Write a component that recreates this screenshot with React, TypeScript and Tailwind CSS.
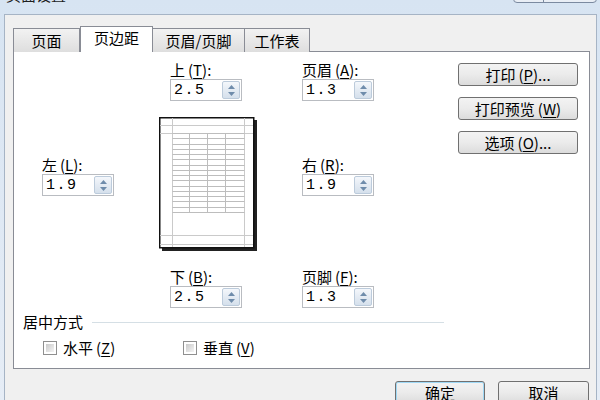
import React from "react";

const CJK = { fontFamily: '"Noto Sans CJK SC", "Noto Sans", sans-serif' };

function Mn({ pre, k, post }: { pre: string; k: string; post: string }) {
  return (
    <span className="whitespace-nowrap">
      {pre}
      <span className="ml-[3px]">(</span>
      <span className="underline underline-offset-2">{k}</span>){post}
    </span>
  );
}

function SpinBtn() {
  return (
    <div className="w-[18px] h-[18px] rounded-[2px] border border-[#bccbdb] bg-gradient-to-b from-[#f4f7fb] via-[#e4ebf3] to-[#d5e0ec] flex flex-col items-center justify-center gap-[3px]">
      <svg width="7" height="4" viewBox="0 0 7 4"><path d="M0 4 L3.5 0 L7 4 Z" fill="#6f8cab" /></svg>
      <svg width="7" height="4" viewBox="0 0 7 4"><path d="M0 0 L3.5 4 L7 0 Z" fill="#6f8cab" /></svg>
    </div>
  );
}

function Spinner({ value }: { value: string }) {
  return (
    <div className="w-[72px] h-[22px] border border-[#b9bcc1] bg-white flex items-center justify-between pl-[3px] pr-[1px]">
      <span className="text-[15px] leading-none tracking-[1.5px] text-black" style={{ fontFamily: '"Liberation Mono", monospace' }}>
        {value}
      </span>
      <SpinBtn />
    </div>
  );
}

function Field({ pre, k, value }: { pre: string; k: string; value: string }) {
  return (
    <div className="flex flex-col">
      <div className="h-[16px] leading-[16px] text-[15px] mb-px">
        <Mn pre={pre} k={k} post=":" />
      </div>
      <Spinner value={value} />
    </div>
  );
}

function Btn({ children, w = "w-[120px]", extra = "" }: { children: React.ReactNode; w?: string; extra?: string }) {
  return (
    <div className={`${w} h-[23px] rounded-[3px] border border-[#707070] bg-gradient-to-b from-[#f3f3f3] via-[#ebebeb] to-[#dcdcdc] flex items-center justify-center text-[15px] leading-none ${extra}`}>
      {children}
    </div>
  );
}

function Checkbox() {
  return (
    <div className="w-[14px] h-[14px] border border-[#8f8f8f] bg-white p-[2px]">
      <div className="w-full h-full bg-gradient-to-br from-[#cbcbcb] to-[#f4f4f4]" />
    </div>
  );
}

function Preview() {
  const rows: number[] = [];
  for (let i = 0; i <= 15; i++) rows.push(16 + i * 5.25);
  return (
    <svg width="98" height="134" viewBox="0 0 98 134">
      <rect x="3" y="3" width="95" height="131" fill="#222" />
      <rect x="0.75" y="0.75" width="94" height="130" fill="#fff" stroke="#111" strokeWidth="1.5" />
      <line x1="13.5" y1="1" x2="13.5" y2="130" stroke="#cacaca" />
      <line x1="85.5" y1="1" x2="85.5" y2="130" stroke="#cacaca" />
      <line x1="1" y1="8.5" x2="94" y2="8.5" stroke="#cacaca" />
      <line x1="1" y1="16.5" x2="94" y2="16.5" stroke="#cacaca" />
      <line x1="1" y1="118.5" x2="94" y2="118.5" stroke="#cacaca" />
      <line x1="1" y1="127.5" x2="94" y2="127.5" stroke="#cacaca" />
      {rows.map((y, i) => (
        <line key={i} x1="13.5" y1={Math.round(y) + 0.5} x2="85.5" y2={Math.round(y) + 0.5} stroke="#bdbdbd" />
      ))}
      {[30.5, 48.5, 66.5].map((x) => (
        <line key={x} x1={x} y1="16.5" x2={x} y2="95" stroke="#bdbdbd" />
      ))}
    </svg>
  );
}

export default function App() {
  return (
    <div className="w-[600px] h-[400px] overflow-hidden flex flex-col bg-gradient-to-b from-[#d7e4f2] to-[#e6edf6] text-black" style={CJK}>
      {/* title bar */}
      <div className="h-[14px] flex justify-between shrink-0">
        <div className="ml-[6px] -mt-[13px] text-[15px] leading-[16px] text-[#1e1e1e]">页面设置</div>
        <div className="mr-[3px] -mt-[4px] w-[84px] h-[7px] flex rounded-b-[4px] border border-[#7b8aa0] bg-[#e9eef5]">
          <div className="w-[30px] border-r border-[#7b8aa0]" />
        </div>
      </div>
      {/* content */}
      <div className="flex-1 ml-[4px] mr-[3px] border border-[#a6b4c5] bg-[#f0f0f0] pl-[8px] pr-[6px] pt-[11px] flex flex-col">
        {/* tabs */}
        <div className="flex items-end h-[26px] relative z-10 -mb-px">
          <div className="w-[67px] h-[24px] border border-[#898c95] border-b-0 bg-gradient-to-b from-[#f2f2f2] to-[#dedede] flex items-center justify-center text-[15px] pt-px">页面</div>
          <div className="w-[73px] h-[26px] border border-[#898c95] border-b-0 bg-white flex items-center justify-center text-[15px] pb-[2px]">页边距</div>
          <div className="w-[92px] h-[24px] border border-[#898c95] border-b-0 border-l-0 bg-gradient-to-b from-[#f2f2f2] to-[#dedede] flex items-center justify-center text-[15px] pt-px">页眉/页脚</div>
          <div className="w-[65px] h-[24px] border border-[#898c95] border-b-0 border-l-0 bg-gradient-to-b from-[#f2f2f2] to-[#dedede] flex items-center justify-center text-[15px] pt-px">工作表</div>
        </div>
        {/* panel */}
        <div className="h-[318px] border border-[#898c95] bg-white flex shrink-0">
          <div className="w-[444px] flex flex-col shrink-0">
            <div className="pt-[10px] pl-[156px] flex">
              <div className="w-[132px]"><Field pre="上" k="T" value="2.5" /></div>
              <Field pre="页眉" k="A" value="1.3" />
            </div>
            <div className="mt-[16px] flex items-start">
              <div className="w-[145px] pl-[28px] pt-[40px]"><Field pre="左" k="L" value="1.9" /></div>
              <Preview />
              <div className="ml-[45px] pt-[40px]"><Field pre="右" k="R" value="1.9" /></div>
            </div>
            <div className="mt-[18px] pl-[156px] flex">
              <div className="w-[132px]"><Field pre="下" k="B" value="2.5" /></div>
              <Field pre="页脚" k="F" value="1.3" />
            </div>
            <div className="mt-[6px] pl-[9px] mr-[14px] flex items-center h-[16px]">
              <span className="text-[15px] leading-[16px]">居中方式</span>
              <div className="flex-1 ml-[9px] h-px bg-[#d5dfe5]" />
            </div>
            <div className="mt-[10px] pl-[29px] flex items-center h-[16px] text-[15px] leading-[16px]">
              <div className="w-[140px] flex items-center gap-[6px]"><Checkbox /><Mn pre="水平" k="Z" post="" /></div>
              <div className="flex items-center gap-[6px]"><Checkbox /><Mn pre="垂直" k="V" post="" /></div>
            </div>
          </div>
          <div className="pt-[11px] flex flex-col gap-[11px]">
            <Btn><Mn pre="打印" k="P" post="..." /></Btn>
            <Btn><Mn pre="打印预览" k="W" post="" /></Btn>
            <Btn><Mn pre="选项" k="O" post="..." /></Btn>
          </div>
        </div>
        {/* bottom buttons */}
        <div className="flex justify-end gap-[13px] pt-[12px] pr-[1px]">
          <Btn w="w-[90px]" extra="border-[#3c7fb1] shadow-[inset_0_0_0_1px_#9fd8f5]">确定</Btn>
          <Btn w="w-[91px]">取消</Btn>
        </div>
      </div>
    </div>
  );
}
